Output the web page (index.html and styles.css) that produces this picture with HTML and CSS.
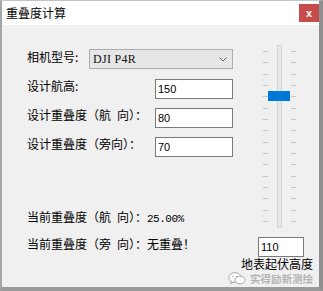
FILE: index.html
```html
<html>

<head>
    <meta charset="utf-8">
    <link rel="stylesheet" href="styles.css">
</head>

<body>
    <div class="window">
        <div class="titlebar">
            <span class="title">重叠度计算</span>
            <button class="close">x</button>
        </div>
        <div class="content">
            <form class="form">
                <div class="row row-camera">
                    <label class="label label-short">相机型号:</label>
                    <div class="combo">
                        <span class="combo-text">DJI P4R</span>
                        <svg class="chevron" width="8" height="5" viewBox="0 0 8 5">
                            <path d="M0.5 0.5 L4 4 L7.5 0.5" fill="none" stroke="#606060" stroke-width="1" />
                        </svg>
                    </div>
                </div>
                <div class="row">
                    <label class="label label-long">设计航高:</label>
                    <input class="field" type="text" value="150">
                </div>
                <div class="row">
                    <label class="label label-long">设计重叠度（航&ensp;向）：</label>
                    <input class="field" type="text" value="80">
                </div>
                <div class="row">
                    <label class="label label-long">设计重叠度（旁向）：</label>
                    <input class="field" type="text" value="70">
                </div>
                <div class="status status-first">当前重叠度（航&ensp;向）：<span class="num">25.00%</span></div>
                <div class="status">当前重叠度（旁&ensp;向）：无重叠！</div>
            </form>
            <div class="side">
                <div class="trackbar">
                    <div class="ticks">
                        <i></i><i></i><i></i><i></i><i></i><i></i><i></i><i></i>
                        <i></i><i></i><i></i><i></i><i></i><i></i><i></i><i></i>
                    </div>
                    <div class="track"></div>
                    <div class="ticks">
                        <i></i><i></i><i></i><i></i><i></i><i></i><i></i><i></i>
                        <i></i><i></i><i></i><i></i><i></i><i></i><i></i><i></i>
                    </div>
                    <div class="thumb"></div>
                </div>
                <input class="field field-small" type="text" value="110">
                <div class="side-label">地表起伏高度</div>
                <div class="watermark">
                    <svg width="18" height="13" viewBox="0 0 18 13">
                        <ellipse cx="7" cy="5.5" rx="6.2" ry="4.8" fill="#fff" stroke="#a8a8a8" />
                        <path d="M3.5 9 L2.5 11.5 L6 10" fill="#fff" stroke="#a8a8a8" />
                        <ellipse cx="12" cy="8" rx="5" ry="3.9" fill="#fff" stroke="#a8a8a8" />
                        <circle cx="5" cy="4.5" r="0.8" fill="#a8a8a8" />
                        <circle cx="9" cy="4.5" r="0.8" fill="#a8a8a8" />
                    </svg>
                    <span>实得励新测绘</span>
                </div>
            </div>
        </div>
    </div>
</body>

</html>
```

FILE: styles.css
```css
html,
body {
    margin: 0;
    padding: 0;
}

body {
    width: 323px;
    height: 291px;
    overflow: hidden;
    font-family: "Noto Sans CJK SC", "Liberation Sans", sans-serif;
    font-size: 12px;
    color: #000;
}

.window {
    box-sizing: border-box;
    width: 323px;
    height: 291px;
    display: flex;
    flex-direction: column;
    background: #f0f0f0;
    border-top: 1px solid #c4c4c4;
    border-left: 2px solid #a6a6a6;
    border-right: 4px solid #8e8e8e;
    border-bottom: 4px solid #9a9a9a;
}

.titlebar {
    height: 24px;
    display: flex;
    align-items: center;
    justify-content: space-between;
    background: #fff;
    padding-left: 4px;
}

.title {
    font-size: 12px;
    line-height: 14px;
}

button.close {
    width: 20px;
    height: 18px;
    padding: 0;
    border: none;
    background: #c74b4b;
    color: #fff;
    font-family: "Liberation Sans", sans-serif;
    font-weight: bold;
    font-size: 11px;
    line-height: 18px;
}

.content {
    flex: 1;
    display: flex;
}

/* left column */

.form {
    flex: 1;
    margin: 0;
    padding: 24px 0 0 25px;
    display: flex;
    flex-direction: column;
}

.row {
    display: flex;
    align-items: flex-start;
    margin-top: 9px;
}

.row-camera {
    margin-top: 0;
}

.row-camera + .row {
    margin-top: 10px;
}

.label {
    line-height: 14px;
    white-space: nowrap;
}

.label-short {
    width: 62px;
    margin-top: 1px;
}

.label-long {
    width: 128px;
}

.combo {
    box-sizing: border-box;
    width: 144px;
    height: 20px;
    display: flex;
    align-items: center;
    justify-content: space-between;
    padding: 0 5px 0 3px;
    border: 1px solid #adadad;
    background: #e6e6e6;
}

.combo-text {
    font-family: "Liberation Serif", serif;
    font-size: 12px;
    letter-spacing: 0.3px;
    color: #111;
}

.field {
    box-sizing: border-box;
    width: 78px;
    height: 20px;
    margin: 0;
    padding: 0 0 0 2px;
    border: 1px solid #7a7a7a;
    border-radius: 0;
    background: #fff;
    font-family: "Liberation Sans", sans-serif;
    font-size: 11px;
    color: #000;
    outline: none;
}

.status {
    line-height: 14px;
    white-space: nowrap;
    margin-top: 11px;
}

.status-first {
    margin-top: 53px;
}

.num {
    font-family: "Liberation Mono", monospace;
    font-size: 11px;
    letter-spacing: -0.5px;
}

/* right column */

.side {
    width: 72px;
    padding: 20px 6px 0 0;
    display: flex;
    flex-direction: column;
    align-items: flex-end;
}

.trackbar {
    position: relative;
    display: flex;
    gap: 9px;
    height: 183px;
    margin-right: 17px;
}

.ticks {
    width: 5px;
    padding: 6px 0;
    display: flex;
    flex-direction: column;
    justify-content: space-between;
}

.ticks i {
    display: block;
    height: 1px;
    background: #c6c6c6;
}

.track {
    box-sizing: border-box;
    width: 5px;
    height: 100%;
    border: 1px solid #d6d6d6;
    background: #e7e7e7;
}

.thumb {
    position: absolute;
    left: 5px;
    top: 46px;
    width: 22px;
    height: 10px;
    background: #0078d7;
}

.field-small {
    width: 46px;
    margin: 9px 9px 0 0;
}

.side-label {
    line-height: 14px;
    white-space: nowrap;
}

.watermark {
    display: flex;
    align-items: center;
    gap: 4px;
    margin-top: 1px;
    white-space: nowrap;
    color: #b2b2b2;
    font-size: 10.5px;
    font-weight: bold;
    line-height: 12px;
    text-shadow: 0 0 1px #fff;
}
```
